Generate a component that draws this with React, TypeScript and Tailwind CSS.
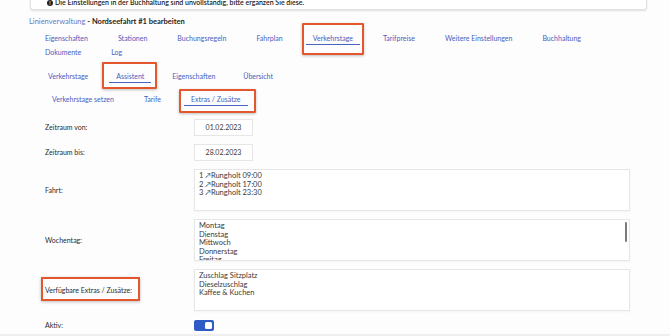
import React from "react";

type TabProps = { label: string; active?: boolean; marked?: string };

function Tab({ label, active, marked }: TabProps) {
  return (
    <div className="relative flex h-[14px] items-center px-[7px]">
      <span className="text-[#4a5cbe]">{label}</span>
      {active && <div className="absolute bottom-0 left-0 right-0 h-[1.5px] bg-[#4a63c0]" />}
      {/* red annotation frame */}
      {marked && <div className={"absolute rounded-[1px] border-2 border-[#e4572e] shadow-[0_1px_3px_rgba(0,0,0,0.25)] " + marked} />}
    </div>
  );
}

function Field({ label, children, boxed }: { label: string; children: React.ReactNode; boxed?: boolean }) {
  return (
    <>
      <div className="flex items-center">
        <span className="relative text-[#2b2b2b]">
          {label}
          {boxed && (
            <span className="absolute -left-[4px] -right-[8px] -top-[8px] -bottom-[6px] border-2 border-[#e4572e] shadow-[0_1px_3px_rgba(0,0,0,0.25)]" />
          )}
        </span>
      </div>
      <div>{children}</div>
    </>
  );
}

function ListBox({ lines, scroll }: { lines: string[]; scroll?: boolean }) {
  return (
    <div className="relative h-[42px] w-[436px] overflow-hidden border border-[#e6e6e6] bg-white px-[4px] pt-[2px] text-[7.5px] leading-[8.5px] text-[#3a3a3a] shadow-[0_1px_2px_rgba(0,0,0,0.04)]">
      {lines.map((l) => (
        <div key={l}>{l}</div>
      ))}
      {scroll && <div className="absolute right-[2px] top-[2px] h-[20px] w-[2.5px] rounded-full bg-[#7a7a7a]" />}
    </div>
  );
}

function DateBox({ value }: { value: string }) {
  return (
    <div className="flex h-[17px] w-[59px] items-center justify-center border border-[#e6e6e6] bg-white text-[#3a3a3a]">
      {value}
    </div>
  );
}

export default function App() {
  return (
    <div className="h-[336px] w-[670px] overflow-hidden border-b-2 border-[#efefef] bg-[#fdfdfd] text-[7px] font-['Lato',sans-serif]">
      {/* notice */}
      <div className="ml-[30px] -mt-[8px] h-[18px] w-[617px] rounded-b-[3px] border border-[#e2e2e2] bg-white pl-[16px] pt-[5px] leading-[8px] shadow-[0_1px_2px_rgba(0,0,0,0.12)]">
        <span className="font-semibold text-[#222]">
          <span className="mr-[2px] inline-flex h-[6px] w-[6px] items-center justify-center rounded-full bg-[#222] align-middle text-[5px] text-white">!</span>
          Die Einstellungen in der Buchhaltung sind unvollständig, bitte ergänzen Sie diese.
        </span>
      </div>

      <div className="ml-[29px] mt-[8px] leading-[8px] text-[7.5px]">
        <span className="text-[#6a7bc4]">Linienverwaltung</span>
        <span className="font-bold text-[#1e1e1e]"> - Nordseefahrt #1 bearbeiten</span>
      </div>

      <div className="ml-[38px] mt-[5px] flex w-[580px] flex-wrap gap-x-[16px]">
        <Tab label="Eigenschaften" />
        <Tab label="Stationen" />
        <Tab label="Buchungsregeln" />
        <Tab label="Fahrplan" />
        <Tab label="Verkehrstage" active marked="-left-[4px] -right-[4px] -top-[8px] -bottom-[10px]" />
        <Tab label="Tarifpreise" />
        <Tab label="Weitere Einstellungen" />
        <Tab label="Buchhaltung" />
        <Tab label="Dokumente" />
        <Tab label="Log" />
      </div>

      <div className="ml-[41px] mt-[10px] flex gap-x-[14px]">
        <Tab label="Verkehrstage" />
        <Tab label="Assistent" active marked="-left-[7px] -right-[6px] -top-[7px] -bottom-[6px]" />
        <Tab label="Eigenschaften" />
        <Tab label="Übersicht" />
      </div>

      <div className="ml-[45px] mt-[9px] flex gap-x-[16px]">
        <Tab label="Verkehrstage setzen" />
        <Tab label="Tarife" />
        <Tab label="Extras / Zusätze" active marked="-left-[5px] -right-[8px] -top-[3px] -bottom-[7px]" />
      </div>

      <div className="ml-[45px] mt-[13px] grid grid-cols-[149px_436px] gap-y-[8px]">
        <Field label="Zeitraum von:">
          <DateBox value="01.02.2023" />
        </Field>
        <Field label="Zeitraum bis:">
          <DateBox value="28.02.2023" />
        </Field>
        <Field label="Fahrt:">
          <ListBox lines={["1 ↗Rungholt 09:00", "2 ↗Rungholt 17:00", "3 ↗Rungholt 23:30"]} />
        </Field>
        <Field label="Wochentag:">
          <ListBox lines={["Montag", "Dienstag", "Mittwoch", "Donnerstag", "Freitag"]} scroll />
        </Field>
        <Field label="Verfügbare Extras / Zusätze:" boxed>
          <ListBox lines={["Zuschlag Sitzplatz", "Dieselzuschlag", "Kaffee & Kuchen"]} />
        </Field>
        <Field label="Aktiv:">
          <div className="mt-[1px] flex h-[11px] w-[20px] items-center justify-end rounded-[2px] bg-[#2f5bc6] pr-[2px]">
            <div className="h-[7px] w-[7px] rounded-[1.5px] bg-white" />
          </div>
        </Field>
      </div>
    </div>
  );
}
